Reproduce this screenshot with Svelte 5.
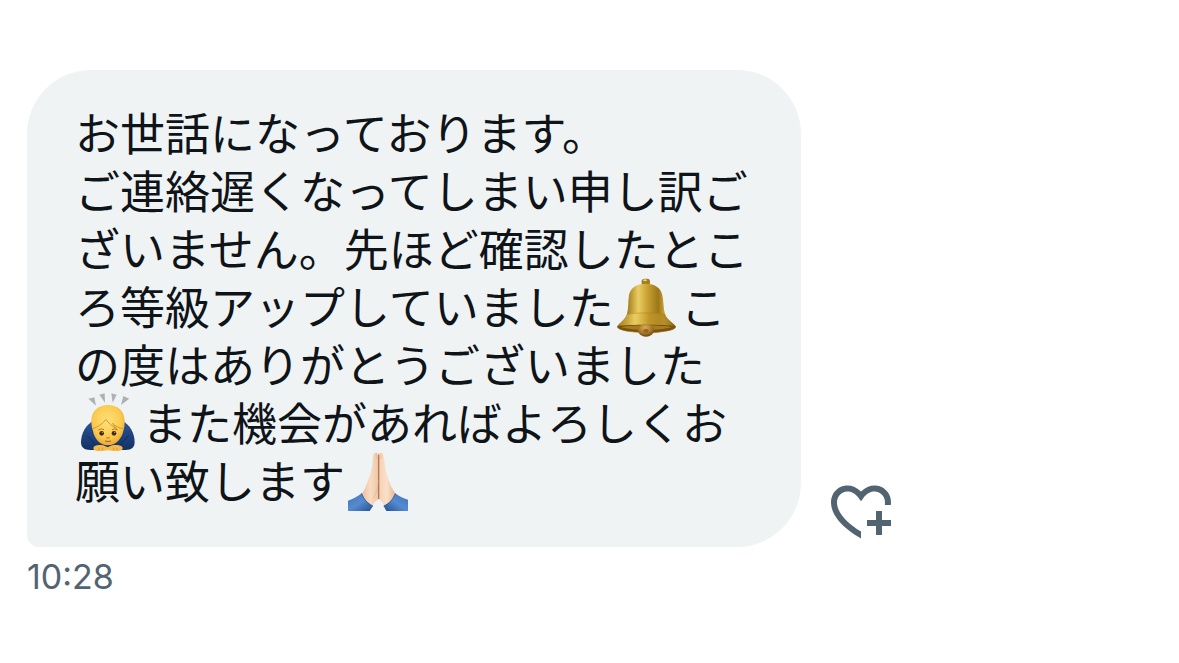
<script>
  const time = '10:28';
</script>

{#snippet bell()}
  <svg class="emoji" viewBox="54 27 180 174" role="img" aria-label="🔔">
    <defs>
      <linearGradient id="bell-body" x1="0" x2="1" y1="0" y2="0">
        <stop offset="0" stop-color="#8f6d16" />
        <stop offset=".18" stop-color="#a57e1c" />
        <stop offset=".36" stop-color="#e9cd62" />
        <stop offset=".52" stop-color="#c8a032" />
        <stop offset=".7" stop-color="#9c7619" />
        <stop offset=".8" stop-color="#c8a136" />
        <stop offset="1" stop-color="#7a5a10" />
      </linearGradient>
      <linearGradient id="bell-rim" x1="0" x2="1" y1="0" y2="0">
        <stop offset="0" stop-color="#a57d1b" />
        <stop offset=".3" stop-color="#ecd063" />
        <stop offset=".55" stop-color="#bf9527" />
        <stop offset=".85" stop-color="#b08721" />
        <stop offset="1" stop-color="#8a6715" />
      </linearGradient>
      <radialGradient id="bell-clapper" cx=".45" cy=".3" r=".7">
        <stop offset="0" stop-color="#d9ac55" />
        <stop offset=".6" stop-color="#a9782a" />
        <stop offset="1" stop-color="#6b4710" />
      </radialGradient>
    </defs>
    <rect x="128" y="26" width="25" height="20" rx="8" fill="#a27c22" />
    <ellipse cx="138" cy="31" rx="6" ry="3" fill="#ecd27a" />
    <path d="M55 169c4-8 24-20 29-37 5-16 3-38 6-57 4-20 21-34 50-34s46 14 50 34c4 19 3 41 8 57 5 17 28 29 32 37 2 5-9 12-24 15-40 8-85 8-126 0-15-3-27-10-25-15z" fill="url(#bell-body)" />
    <path d="M84 133c18-6 96-6 114 0 5 17 28 29 32 37 1 5-9 11-24 13-40 7-85 7-126 0-15-2-26-8-25-13 4-8 24-20 29-37z" fill="url(#bell-rim)" opacity=".85" />
    <path d="M84 134c22-7 92-7 114 0" fill="none" stroke="#987218" stroke-width="3" opacity=".35" />
    <path d="M56 168c30-5 141-5 173 0 1 6-9 11-24 14-40 7-85 7-126 0-15-3-25-8-23-14z" fill="#77540f" />
    <path d="M66 171c34-6 118-6 153 0-36 12-117 12-153 0z" fill="#a77b26" />
    <ellipse cx="141" cy="181" rx="24" ry="19" fill="url(#bell-clapper)" />
    <ellipse cx="141" cy="182" rx="8" ry="6" fill="#77500f" opacity=".6" />
  </svg>
{/snippet}

{#snippet bow()}
  <svg class="emoji" viewBox="24 30 180 174" role="img" aria-label="🙇">
    <defs>
      <radialGradient id="bow-head" cx=".48" cy=".4" r=".65">
        <stop offset="0" stop-color="#ffe07a" />
        <stop offset=".65" stop-color="#fbc94e" />
        <stop offset="1" stop-color="#e5a030" />
      </radialGradient>
      <linearGradient id="bow-sleeve" x1="0" x2="0" y1="0" y2="1">
        <stop offset="0" stop-color="#2b5496" />
        <stop offset="1" stop-color="#143167" />
      </linearGradient>
    </defs>
    <g fill="#adb1b4">
      <path d="M55 41l18-4 5 25z" />
      <path d="M88 29l16-4 1 28z" />
      <path d="M124 25l16 4-12 24z" />
      <path d="M160 33l18 8-25 19z" />
    </g>
    <path d="M72 108c-23 8-39 37-39 64 0 16 10 23 28 23h106c18 0 27-8 27-24 0-26-15-55-39-63z" fill="url(#bow-sleeve)" />
    <path d="M51 151c9 9 19 20 27 32M176 151c-9 9-19 20-27 32" fill="none" stroke="#102b5b" stroke-width="3" />
    <path d="M114 60c-31 0-50 20-50 48 0 12 2 22 5 30 4 24 22 43 45 43s41-19 46-43c3-8 4-18 4-30 0-28-19-48-50-48z" fill="url(#bow-head)" />
    <path d="M68 131c14-4 31-15 40-28 6 11 21 23 32 28-6-6-10-11-12-16 8 9 20 15 32 16" fill="none" stroke="#d39a32" stroke-width="3" stroke-linejoin="round" />
    <path d="M85 135q8-6 17-1M126 134q9-5 17 1" fill="none" stroke="#b87c24" stroke-width="3" />
    <ellipse cx="95" cy="145" rx="7" ry="7" fill="#432914" />
    <ellipse cx="132" cy="145" rx="7" ry="7" fill="#432914" />
    <circle cx="97" cy="142" r="2" fill="#d0a46c" />
    <circle cx="134" cy="142" r="2" fill="#d0a46c" />
    <path d="M109 157q5 5 10 0" fill="none" stroke="#d08a28" stroke-width="4" />
    <path d="M105 168q9 3 18 0" fill="none" stroke="#a65f1a" stroke-width="3" />
    <path d="M70 189c1-9 15-11 30-8l13 6 13-6c15-3 31-1 32 8 0 8-13 10-27 9l-18-2-17 2c-14 1-26-1-26-9z" fill="#f5bb48" />
    <path d="M89 188l-4 7M99 188l-3 7M139 188l3 7M129 188l3 7" stroke="#cc8626" stroke-width="2" />
  </svg>
{/snippet}

{#snippet hands()}
  <svg class="emoji" viewBox="39 39 180 174" role="img" aria-label="🙏🏻">
    <defs>
      <linearGradient id="hand-left" x1="0" x2="1" y1="0" y2="0">
        <stop offset="0" stop-color="#e9bf9f" />
        <stop offset=".5" stop-color="#f9dcc1" />
        <stop offset="1" stop-color="#edc6a5" />
      </linearGradient>
      <linearGradient id="hand-right" x1="0" x2="1" y1="0" y2="0">
        <stop offset="0" stop-color="#f4d2b6" />
        <stop offset=".5" stop-color="#fae0c9" />
        <stop offset="1" stop-color="#e3b592" />
      </linearGradient>
      <linearGradient id="cuff-left" x1="0" x2="1" y1="0" y2="1">
        <stop offset="0" stop-color="#3f72b8" />
        <stop offset=".5" stop-color="#568bd0" />
        <stop offset="1" stop-color="#224f92" />
      </linearGradient>
      <linearGradient id="cuff-right" x1="1" x2="0" y1="0" y2="1">
        <stop offset="0" stop-color="#3f72b8" />
        <stop offset=".5" stop-color="#568bd0" />
        <stop offset="1" stop-color="#224f92" />
      </linearGradient>
    </defs>
    <path d="M39 182c15-5 29-13 41-22l34 38-10 15H39z" fill="url(#cuff-left)" />
    <path d="M219 179c-15-4-27-11-39-19l-34 38 8 15h65z" fill="url(#cuff-right)" />
    <path d="M131 41c-8-6-16-2-17 8-1 22-3 43-11 62-6 14-10 35-22 48 4 15 15 29 31 38 4-9 12-16 19-20z" fill="url(#hand-left)" />
    <path d="M131 41c7-6 14-3 15 7 3 23 5 45 12 64 5 14 11 34 23 47-5 16-17 30-33 38-3-9-10-16-17-20z" fill="url(#hand-right)" />
    <path d="M131 44v133" stroke="#b87551" stroke-width="4" />
    <path d="M131 118c-2 23-6 42-16 57" fill="none" stroke="#d8a17c" stroke-width="2" opacity=".6" />
    <path d="M124 43v15M138 43v14" stroke="#e6b693" stroke-width="2" />
    <path d="M80 160c5 16 15 29 34 38M181 160c-6 16-16 30-35 38" fill="none" stroke="#214a85" stroke-width="3" opacity=".65" />
  </svg>
{/snippet}

<main class="thread">
  <article class="message">
    <div class="row">
      <p class="bubble" lang="ja">お世話になっております。<br />ご連絡遅くなってしまい申し訳ございません。先ほど確認したところ等級アップしていました{@render bell()}この度はありがとうございました{@render bow()}また機会があればよろしくお願い致します{@render hands()}</p>
      <button class="react" type="button" aria-label="リアクション">
        <svg viewBox="0 0 24 24" aria-hidden="true">
          <path d="M17 12v3h-2.998v2h3v3h2v-3h3v-2h-3.001v-3H17zm-5 6.839c-3.871-2.34-6.053-4.639-7.127-6.609-1.112-2.04-1.031-3.7-.479-4.82.561-1.13 1.667-1.84 2.91-1.91 1.222-.06 2.68.51 3.892 2.16l.806 1.09.805-1.09c1.211-1.65 2.668-2.22 3.89-2.16 1.242.07 2.347.78 2.908 1.91.334.677.49 1.554.321 2.59h2.011c.153-1.283-.039-2.469-.539-3.48-.887-1.79-2.647-2.91-4.601-3.01-1.65-.09-3.367.56-4.796 2.01-1.43-1.45-3.147-2.1-4.798-2.01-1.954.1-3.714 1.22-4.601 3.01-.896 1.81-.846 4.17.514 6.67 1.353 2.48 4.003 5.12 8.382 7.67l.502.299v-2.32z" />
        </svg>
      </button>
    </div>
    <time class="time" datetime={time}>{time}</time>
  </article>
</main>

<style>
  :global(body) {
    margin: 0;
    background: #fff;
  }

  .thread {
    padding: 70px 27px;
  }

  .message {
    display: flex;
    flex-direction: column;
    gap: 8px;
  }

  .row {
    display: flex;
    align-items: flex-end;
    gap: 24px;
  }

  .bubble {
    box-sizing: border-box;
    max-width: 774px;
    margin: 0;
    padding: 33px 48px 38px;
    border-radius: 64px 64px 64px 12px;
    background: #eff3f4;
    color: #0f1419;
    font-family: "Noto Sans CJK JP", sans-serif;
    font-size: 45px;
    line-height: 58px;
  }

  .emoji {
    width: 60px;
    height: 58px;
    margin: 2px 4px -2px 3px;
    vertical-align: top;
    overflow: visible;
  }

  .react {
    flex: none;
    padding: 0;
    border: 0;
    background: none;
    color: #536471;
    cursor: pointer;
  }

  .react svg {
    display: block;
    width: 72px;
    height: 72px;
    fill: currentColor;
  }

  .time {
    color: #536471;
    font-family: Inter, sans-serif;
    font-size: 34px;
    line-height: 44px;
  }
</style>
